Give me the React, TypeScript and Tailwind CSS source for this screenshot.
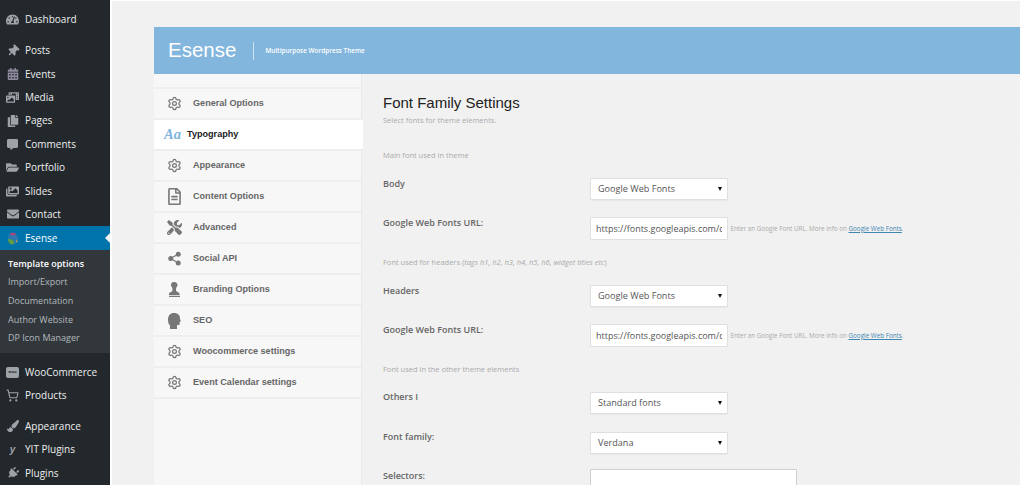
import { Settings, Share2, ShoppingCart } from "lucide-react"
import {
  FaTachometerAlt, FaThumbtack, FaCalendarAlt, FaPhotoVideo, FaCopy, FaCommentAlt, FaFolderOpen,
  FaImages, FaEnvelope, FaPaintBrush, FaPlug, FaTools, FaRegFileAlt,
} from "react-icons/fa"

const openSans = "font-['Open_Sans',sans-serif]"
const arial = "font-['Liberation_Sans',Arial,sans-serif]"

function MenuRow({ icon, label }: { icon: React.ReactNode; label: string }) {
  return (
    <div className="flex h-[23.4px] items-center">
      <span className="flex w-[25px] justify-center text-[#9ea3a8]">{icon}</span>
      <span className="text-[10px] text-[#eeeeee]">{label}</span>
    </div>
  )
}

function Sidebar() {
  return (
    <div className={`${openSans} h-full w-[110px] shrink-0 bg-[#23282d] pt-[8px]`}>
      <MenuRow icon={<FaTachometerAlt size={13} />} label="Dashboard" />
      <div className="mt-[7.6px]">
        <MenuRow icon={<FaThumbtack size={12} className="rotate-45" />} label="Posts" />
        <MenuRow icon={<FaCalendarAlt size={12} className="text-[#8f8a9e]" />} label="Events" />
        <MenuRow icon={<FaPhotoVideo size={13} />} label="Media" />
        <MenuRow icon={<FaCopy size={12} />} label="Pages" />
        <MenuRow icon={<FaCommentAlt size={11} />} label="Comments" />
        <MenuRow icon={<FaFolderOpen size={13} />} label="Portfolio" />
        <MenuRow icon={<FaImages size={13} />} label="Slides" />
        <MenuRow icon={<FaEnvelope size={12} />} label="Contact" />
      </div>
      <div className="relative flex h-[24px] items-center bg-[#0073aa]">
        <span className="flex w-[25px] justify-center">
          <svg width="12" height="13" viewBox="0 0 12 13">
            <ellipse cx="6" cy="6.500" rx="5" ry="6" fill="#2b78b0" />
            <path d="M1 7c0 3 2 5.500 4 5.500 1 0 2-.5 2-2.500 0-2-3-3-6-3z" fill="#5f9e45" />
            <path d="M3 2c1-1.300 4-1.800 6-.3 .5 .5-1 1.800-3 1.800S3 2.800 3 2z" fill="#a5487e" />
            <path d="M9 9c1-.5 2-1.500 2-3 0 2-.5 4-2 5z" fill="#c9a24a" />
          </svg>
        </span>
        <span className="text-[10px] text-white">Esense</span>
        <span className="absolute right-0 top-[7px] h-0 w-0 border-y-[5px] border-r-[5px] border-y-transparent border-r-[#f1f1f1]" />
      </div>
      <div className="h-[103px] bg-[#32373c] pl-[8px] pt-[4px] text-[9px] text-[#b4b9be]">
        {["Template options", "Import/Export", "Documentation", "Author Website", "DP Icon Manager"].map((item, i) => (
          <div key={item} className={`flex h-[18.7px] items-center ${i === 0 ? "font-semibold text-white" : ""}`}>
            {item}
          </div>
        ))}
      </div>
      <div className="mt-[7.3px]">
        <MenuRow icon={<span className="flex h-[11px] w-[13px] items-center justify-center rounded-[2px] bg-[#9ea3a8] text-[4px] font-bold text-[#23282d]">woo</span>} label="WooCommerce" />
        <MenuRow icon={<ShoppingCart size={13} />} label="Products" />
      </div>
      <div className="mt-[7.6px]">
        <MenuRow icon={<FaPaintBrush size={12} />} label="Appearance" />
        <MenuRow icon={<span className={`${arial} text-[10px] font-bold italic`}>y</span>} label="YIT Plugins" />
        <MenuRow icon={<FaPlug size={12} className="rotate-45" />} label="Plugins" />
      </div>
    </div>
  )
}

const gear = <Settings size={15} strokeWidth={2} />

const navItems = [
  { label: "General Options", icon: gear },
  { label: "Typography", active: true },
  { label: "Appearance", icon: gear },
  { label: "Content Options", icon: <FaRegFileAlt size={17} /> },
  { label: "Advanced", icon: <FaTools size={15} /> },
  { label: "Social API", icon: <Share2 size={15} fill="#777777" /> },
  {
    label: "Branding Options",
    icon: (
      <svg width="11" height="15" viewBox="0 0 11 15" fill="#777777">
        <path d="M5.500 0a3 3 0 0 1 2.200 5c-.5 .7-.7 1.500-.7 3 0 1 .5 1.500 1.500 2 1.500 .5 2 1 2 2v1H0v-1c0-1 .5-1.500 2-2 1-.5 1.500-1 1.500-2 0-1.500-.2-2.300-.7-3A3 3 0 0 1 5.500 0zM0 13.800h11V15H0z" />
      </svg>
    ),
  },
  {
    label: "SEO",
    icon: (
      <svg width="13" height="16" viewBox="0 0 13 16" fill="#777777">
        <path d="M6 0c4 0 6 2.400 6 5.500 0 .8.400 1.500.8 2.200.2.400 0 .700-.5.800l-.6.200v2.100c0 .800-.5 1.200-1.200 1.200H9V16H2v-3.500C.7 11.300 0 9.500 0 6.800 0 2.600 2.200 0 6 0z" />
      </svg>
    ),
  },
  { label: "Woocommerce settings", icon: gear },
  { label: "Event Calendar settings", icon: gear },
]

function SideNav() {
  return (
    <div className={`${arial} w-[208px] shrink-0 border-r border-[#e9e9e9] bg-[#f7f7f7] pt-[13px]`}>
      {navItems.map((item) =>
        item.active ? (
          <div key={item.label} className="-mr-[2px] relative flex h-[31px] items-center border-t-2 border-[#eeeeee] bg-white pl-[10px]">
            <span className="w-[23px] font-['Liberation_Serif',serif] text-[14.500px] font-bold italic leading-none text-[#7fb4dc]">Aa</span>
            <span className="text-[9.100px] font-bold text-[#222222]">{item.label}</span>
          </div>
        ) : (
          <div key={item.label} className="flex h-[31px] items-center border-t-2 border-[#eeeeee]">
            <span className="flex w-[39px] pl-[12px] text-[#777777]">
              <span className="flex w-[17px] justify-center">{item.icon}</span>
            </span>
            <span className="text-[9.100px] font-bold text-[#666666]">{item.label}</span>
          </div>
        ),
      )}
      <div className="border-t-2 border-[#eeeeee]" />
    </div>
  )
}

function Select({ value }: { value: string }) {
  return (
    <div className="flex h-[22px] w-[138px] items-center justify-between rounded-[1px] border border-[#dfdfdf] bg-white pl-[7px] pr-[5px] text-[9.100px] text-[#555555] shadow-[0_1px_1px_rgba(0,0,0,0.04)]">
      <span>{value}</span>
      <span className="h-0 w-0 border-x-[2.500px] border-t-[4px] border-x-transparent border-t-[#111111]" />
    </div>
  )
}

function UrlInput() {
  return (
    <div className="flex items-center">
      <input
        readOnly
        value="https://fonts.googleapis.com/css?family=Open+Sans"
        className="h-[23px] w-[138px] rounded-[1px] border border-[#dfdfdf] bg-white px-[5px] text-[9px] text-[#555555] outline-none"
      />
      <span className="ml-[2.500px] text-[6.300px] text-[#aaaaaa]">
        Enter an Google Font URL. More info on{" "}
        <a href="#fonts" className="text-[#3f86b0] underline">Google Web Fonts</a>.
      </span>
    </div>
  )
}

function FormRow({ label, className, labelClass, children }: { label: string; className: string; labelClass?: string; children: React.ReactNode }) {
  return (
    <div className={`flex items-start border-b border-[#efefef] pl-[21px] ${className}`}>
      <span className={`w-[207px] text-[9px] font-semibold leading-[12px] text-[#666666] ${labelClass ?? ""}`}>{label}</span>
      {children}
    </div>
  )
}

function Note({ children, height }: { children: React.ReactNode; height: string }) {
  return (
    <div className={`flex ${height} items-center border-b border-[#efefef] pl-[21px] text-[7.500px] text-[#aaaaaa]`}>
      {children}
    </div>
  )
}

export default function App() {
  return (
    <div className="flex h-[485px] w-[1020px] overflow-hidden bg-[#f1f1f1]">
      <Sidebar />
      <div className="flex min-w-0 flex-1 flex-col border-l-2 border-t border-white pl-[42px] pt-[26px]">
        <div className="flex h-[47px] shrink-0 items-center bg-[#83b6dd] pl-[14px] text-white">
          <span className={`${arial} text-[20.500px]`}>Esense</span>
          <span className="ml-[17px] h-[18px] w-px bg-white/60" />
          <span className={`${openSans} ml-[11px] text-[6.400px] font-semibold`}>Multipurpose Wordpress Theme</span>
        </div>
        <div className="flex min-h-0 flex-1">
          <SideNav />
          <div className={`${openSans} min-w-0 flex-1`}>
            <div className="h-[69px] border-b border-[#efefef] pl-[21px] pt-[19px]">
              <h1 className={`${arial} text-[15px] leading-[20px] text-[#222222]`}>Font Family Settings</h1>
              <p className="mt-[2px] text-[7.500px] text-[#aaaaaa]">Select fonts for theme elements.</p>
            </div>
            <Note height="h-[26px] pt-[1px]">Main font used in theme</Note>
            <FormRow label="Body" className="h-[41px] pt-[9px]"><Select value="Google Web Fonts" /></FormRow>
            <FormRow label="Google Web Fonts URL:" className="h-[40px] pt-[7px]"><UrlInput /></FormRow>
            <Note height="h-[27px]">
              <span>Font used for headers (<em>tags h1, h2, h3, h4, h5, h6, widget titles etc</em>)</span>
            </Note>
            <FormRow label="Headers" className="h-[39px] pt-[8px]"><Select value="Google Web Fonts" /></FormRow>
            <FormRow label="Google Web Fonts URL:" className="h-[40px] pt-[8px]"><UrlInput /></FormRow>
            <Note height="h-[27px] pt-[1px]">Font used in the other theme elements</Note>
            <FormRow label="Others I" className="h-[39px] pt-[9px]" labelClass="-mt-[1px]"><Select value="Standard fonts" /></FormRow>
            <FormRow label="Font family:" className="h-[40px] pt-[10px]" labelClass="-mt-[1px]"><Select value="Verdana" /></FormRow>
            <div className="flex items-start pl-[21px] pt-[7px]">
              <span className="w-[207px] text-[9px] font-semibold text-[#666666]">Selectors:</span>
              <div className="h-[60px] w-[207px] rounded-[1px] border border-[#cfcfcf] bg-white" />
            </div>
          </div>
        </div>
      </div>
    </div>
  )
}
